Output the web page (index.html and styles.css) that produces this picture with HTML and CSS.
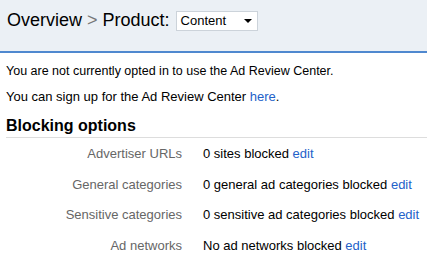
FILE: index.html
```html
<!DOCTYPE html>
<html lang="en">
<head>
    <meta charset="UTF-8">
    <title>Blocking options</title>
    <link rel="stylesheet" href="styles.css">
</head>
<body>
    <div id="header">
        <span class="crumb">Overview</span>
        <span class="sep">&gt;</span>
        <span class="crumb">Product:</span>
        <div class="select">
            <span>Content</span>
            <span class="arrow"></span>
        </div>
    </div>

    <div id="content">
        <p class="notice">You are not currently opted in to use the Ad Review Center.</p>
        <p class="signup">You can sign up for the Ad Review Center <a href="#">here</a>.</p>
        <h2>Blocking options</h2>
        <div class="options">
            <div class="label">Advertiser URLs</div>
            <div class="value">0 sites blocked <a href="#">edit</a></div>
            <div class="label">General categories</div>
            <div class="value">0 general ad categories blocked <a href="#">edit</a></div>
            <div class="label">Sensitive categories</div>
            <div class="value">0 sensitive ad categories blocked <a href="#">edit</a></div>
            <div class="label">Ad networks</div>
            <div class="value">No ad networks blocked <a href="#">edit</a></div>
        </div>
    </div>
</body>
</html>
```

FILE: styles.css
```css
body {
    font-family: "Liberation Sans", Arial, sans-serif;
    font-size: 13px;
    margin: 0;
    padding: 0;
    background: #fff;
    color: #000;
}
#header {
    height: 41px;
    padding: 10px 7px 0;
    background: #ebf0f5;
    border-bottom: 2px solid #4f88cf;
    display: flex;
    align-items: flex-start;
    gap: 5px;
}
.crumb {
    font-size: 18px;
    line-height: 21px;
}
.sep {
    font-size: 18px;
    line-height: 21px;
    color: #777;
}
.select {
    display: flex;
    align-items: center;
    justify-content: space-between;
    width: 71px;
    height: 18px;
    margin: 1px 0 0 1px;
    padding: 0 5px 0 4px;
    background: #fff;
    border: 1px solid #ccd3da;
    font-size: 13px;
    line-height: 16px;
}
.arrow {
    width: 0;
    height: 0;
    border-left: 4px solid transparent;
    border-right: 4px solid transparent;
    border-top: 4px solid #000;
}
#content {
    padding: 0 0 0 6px;
}
p {
    margin: 0;
    line-height: 15px;
}
.notice {
    margin-top: 11px;
    font-size: 12.5px;
}
.signup {
    margin-top: 10px;
}
a {
    color: #2361c9;
    text-decoration: none;
}
h2 {
    font-size: 16px;
    line-height: 21px;
    margin: 11px 0 0;
    padding-bottom: 1px;
    border-bottom: 1px solid #ddd;
}
.options {
    display: grid;
    grid-template-columns: 176px auto;
    column-gap: 21px;
    row-gap: 15.7px;
    padding-top: 8px;
    line-height: 15px;
}
.label {
    text-align: right;
    color: #666;
}
```
